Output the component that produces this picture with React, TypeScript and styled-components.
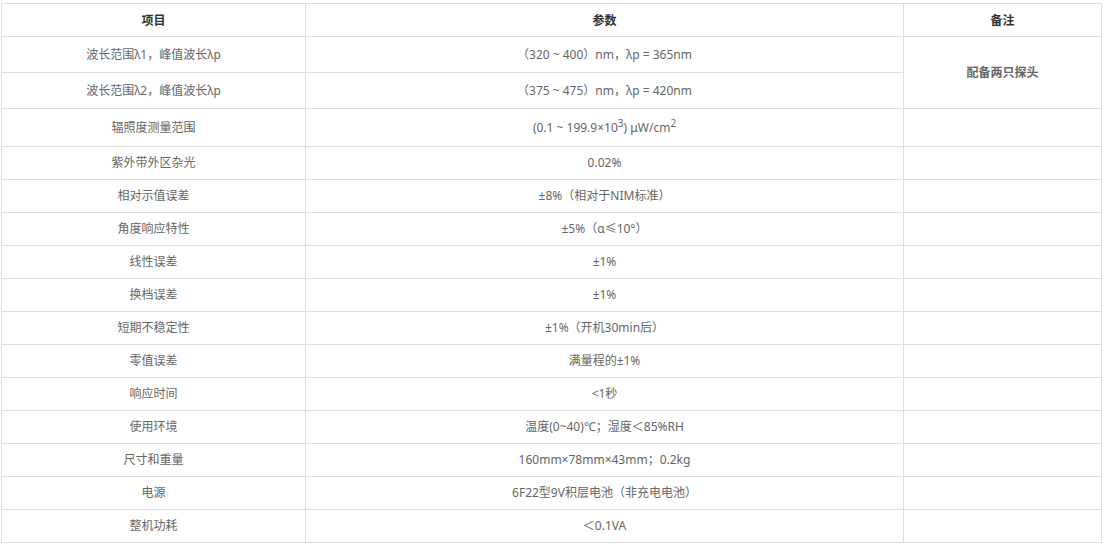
import React from 'react'
import styled, { createGlobalStyle } from 'styled-components'

const GlobalStyle = createGlobalStyle`
  body {
    margin: 0;
    background: #fff;
    font-family: "Noto Sans", "Noto Sans CJK SC", sans-serif;
  }
`

const Page = styled.div`
  padding: 3px 3px 0 1px;
`

const Table = styled.table`
  width: 1100px;
  border-collapse: collapse;
  table-layout: fixed;
  font-size: 12px;
  color: #666;
`

const Row = styled.tr<{ $h: number }>`
  height: ${p => p.$h}px;
`

const HeadCell = styled.th`
  border: 1px solid #dedede;
  padding: 0 6px;
  font-weight: bold;
  color: #333;
  text-align: center;
  vertical-align: middle;
`

const Cell = styled.td<{ $strong?: boolean }>`
  border: 1px solid #dedede;
  padding: 0 6px;
  text-align: center;
  vertical-align: middle;
  line-height: 18px;
  font-weight: ${p => (p.$strong ? 'bold' : 'normal')};
`

const Sup = styled.sup`
  font-size: 10px;
  line-height: 0;
  vertical-align: 5px;
`

interface Spec {
  name: string
  value: React.ReactNode
  h: number
}

const rows: Spec[] = [
  { name: '辐照度测量范围', value: <>(0.1 ~ 199.9×10<Sup>3</Sup>) μW/cm<Sup>2</Sup></>, h: 38 },
  { name: '紫外带外区杂光', value: '0.02%', h: 33 },
  { name: '相对示值误差', value: '±8%（相对于NIM标准）', h: 33 },
  { name: '角度响应特性', value: '±5%（α≤10°）', h: 33 },
  { name: '线性误差', value: '±1%', h: 33 },
  { name: '换档误差', value: '±1%', h: 33 },
  { name: '短期不稳定性', value: '±1%（开机30min后）', h: 33 },
  { name: '零值误差', value: '满量程的±1%', h: 33 },
  { name: '响应时间', value: '<1秒', h: 33 },
  { name: '使用环境', value: '温度(0~40)℃；湿度＜85%RH', h: 33 },
  { name: '尺寸和重量', value: '160mm×78mm×43mm；0.2kg', h: 33 },
  { name: '电源', value: '6F22型9V积层电池（非充电电池）', h: 33 },
  { name: '整机功耗', value: '＜0.1VA', h: 33 },
]

export default function App() {
  return (
    <Page>
      <GlobalStyle />
      <Table>
        <colgroup>
          <col style={{ width: 304 }} />
          <col style={{ width: 598 }} />
          <col style={{ width: 198 }} />
        </colgroup>
        <thead>
          <Row $h={33}>
            <HeadCell>项目</HeadCell>
            <HeadCell>参数</HeadCell>
            <HeadCell>备注</HeadCell>
          </Row>
        </thead>
        <tbody>
          <Row $h={36}>
            <Cell>波长范围λ1，峰值波长λp</Cell>
            <Cell>（320 ~ 400）nm，λp = 365nm</Cell>
            <Cell $strong rowSpan={2}>配备两只探头</Cell>
          </Row>
          <Row $h={36}>
            <Cell>波长范围λ2，峰值波长λp</Cell>
            <Cell>（375 ~ 475）nm，λp = 420nm</Cell>
          </Row>
          {rows.map(r => (
            <Row key={r.name} $h={r.h}>
              <Cell>{r.name}</Cell>
              <Cell>{r.value}</Cell>
              <Cell />
            </Row>
          ))}
        </tbody>
      </Table>
    </Page>
  )
}
